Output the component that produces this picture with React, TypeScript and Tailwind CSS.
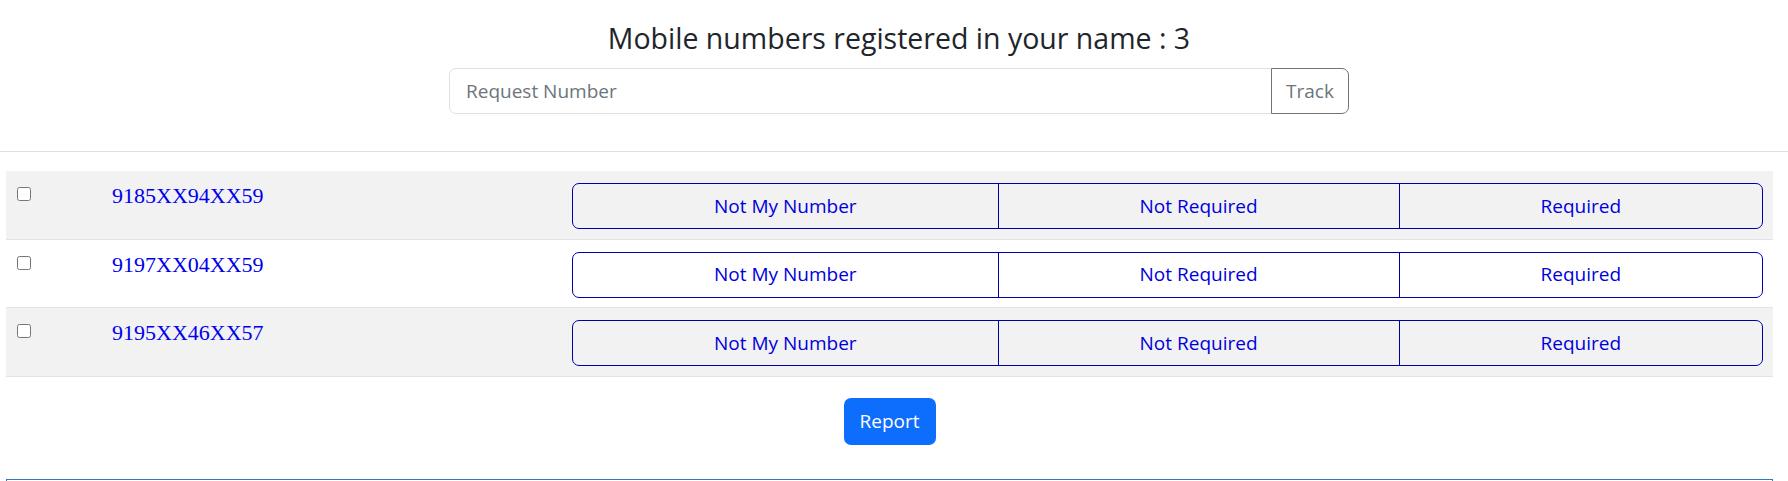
import { useState } from "react";

const numbers = ["9185XX94XX59", "9197XX04XX59", "9195XX46XX57"];
const choices = ["Not My Number", "Not Required", "Required"];

function NumberRow({ value, shaded }: { value: string; shaded: boolean }) {
  const [checked, setChecked] = useState(false);
  return (
    <div
      className={`flex h-[68.5px] items-start border-b border-[#e3e3e3] pt-[12px] pr-[10px] ${shaded ? "bg-[#f2f2f2]" : "bg-white"}`}
    >
      <div className="w-[106px] shrink-0 pl-[11px]">
        <input
          type="checkbox"
          checked={checked}
          onChange={() => setChecked(!checked)}
          className="m-0 h-[14px] w-[14px] accent-[#0d6efd]"
        />
      </div>
      <div className="w-[460px] shrink-0 font-['Liberation_Serif',serif] text-[22px] leading-[1.15] text-[#0000ee]">
        {value}
      </div>
      <div className="flex h-[46px] flex-1 overflow-hidden rounded-[7px] border border-[#0000a8]">
        {choices.map((c, i) => (
          <button
            key={c}
            type="button"
            className={`flex-auto px-3 text-[19px] text-[#0000dd] ${i > 0 ? "border-l border-[#0000a8]" : ""}`}
          >
            {c}
          </button>
        ))}
      </div>
    </div>
  );
}

export default function App() {
  const [request, setRequest] = useState("");

  return (
    <div className="h-[481px] overflow-hidden bg-white font-['Open_Sans',sans-serif]">
      <div className="flex flex-col items-center pt-[21px] pl-[10px]">
        <h3 className="text-[28.5px] leading-[1.2] text-[#212529]">Mobile numbers registered in your name : 3</h3>
        <div className="mt-[13px] flex w-[900px]">
          <input
            value={request}
            onChange={(e) => setRequest(e.target.value)}
            placeholder="Request Number"
            className="h-[46px] flex-1 rounded-l-[7px] border border-[#dee2e6] px-[16px] text-[19px] text-[#212529] outline-none placeholder:text-[#6c757d]"
          />
          <button
            type="button"
            className="-ml-px h-[46px] w-[78px] rounded-r-[7px] border border-[#6c757d] text-[19px] text-[#6c757d]"
          >
            Track
          </button>
        </div>
      </div>

      <hr className="mt-[37px] border-t border-[#dfdfdf]" />

      <div className="mt-[19px] ml-[6px] mr-[15px]">
        {numbers.map((n, i) => (
          <NumberRow key={n} value={n} shaded={i % 2 === 0} />
        ))}
      </div>

      <div className="mt-[21px] flex justify-center pr-[9px]">
        <button
          type="button"
          className="h-[47px] w-[92px] rounded-[7px] bg-[#0d6efd] text-[19px] text-white"
        >
          Report
        </button>
      </div>

      <div className="mt-[34px] ml-[6px] mr-[15px] h-[60px] border border-[#2f78c4]" />
    </div>
  );
}
